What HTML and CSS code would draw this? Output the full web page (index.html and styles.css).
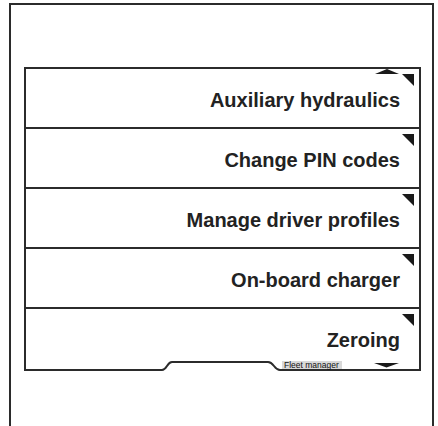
FILE: index.html
```html
<!DOCTYPE html>
<html lang="en">
<head>
    <meta charset="UTF-8">
    <meta name="viewport" content="width=device-width, initial-scale=1.0">
    <title>Settings menu</title>
    <link rel="stylesheet" href="styles.css">
</head>
<body>
    <div class="screen">
        <div class="menu">
            <svg class="scroll-up" width="24" height="5" viewBox="0 0 24 5"><polygon points="0,5 12,0 24,5" /></svg>

            <div class="menu-item">
                <svg class="corner" width="12" height="12" viewBox="0 0 12 12"><polygon points="0,0 12,0 12,12" /></svg>
                <span class="label">Auxiliary hydraulics</span>
            </div>
            <div class="menu-item">
                <svg class="corner" width="12" height="12" viewBox="0 0 12 12"><polygon points="0,0 12,0 12,12" /></svg>
                <span class="label">Change PIN codes</span>
            </div>
            <div class="menu-item">
                <svg class="corner" width="12" height="12" viewBox="0 0 12 12"><polygon points="0,0 12,0 12,12" /></svg>
                <span class="label">Manage driver profiles</span>
            </div>
            <div class="menu-item">
                <svg class="corner" width="12" height="12" viewBox="0 0 12 12"><polygon points="0,0 12,0 12,12" /></svg>
                <span class="label">On-board charger</span>
            </div>
            <div class="menu-item last">
                <svg class="corner" width="12" height="12" viewBox="0 0 12 12"><polygon points="0,0 12,0 12,12" /></svg>
                <span class="label">Zeroing</span>
            </div>

            <!-- bottom edge with the tab notch -->
            <div class="menu-foot">
                <svg class="foot-line" width="393" height="12" viewBox="0 0 393 12">
                    <path d="M0 11 H136 C141 11 141 3 146 3 H242 C248 3 248 11 254 11 H393" />
                </svg>
                <span class="tab-label">Fleet manager</span>
                <svg class="scroll-down" width="25" height="5" viewBox="0 0 25 5"><polygon points="0,0 25,0 12.5,4.5" /></svg>
            </div>
        </div>
    </div>
</body>
</html>
```

FILE: styles.css
```css
body {
    margin: 0;
    padding: 3px 0 0 9px;
    width: 438px;
    height: 426px;
    box-sizing: border-box;
    overflow: hidden;
    background-color: #fff;
    font-family: 'Liberation Sans', Arial, sans-serif;
    color: #222;
}
.screen {
    box-sizing: border-box;
    width: 425px;
    height: 440px;
    padding: 62px 11px 0 13px;
    border: 2px solid #2b2b2b;
}
.menu {
    position: relative;
    display: flex;
    flex-direction: column;
    width: 393px;
    border: 2px solid #2b2b2b;
    border-bottom: none;
}
.menu-item {
    display: flex;
    flex-direction: column;
    align-items: flex-end;
    box-sizing: border-box;
    height: 58px;
    padding: 5px 5px 0 0;
}
.menu-item + .menu-item {
    height: 60px;
    border-top: 2px solid #2b2b2b;
}
.menu-item.last {
    height: 52px;
}
.corner {
    fill: #1a1a1a;
}
.label {
    margin: 3px 14px 0 0;
    font-size: 20px;
    font-weight: bold;
    line-height: 23px;
    white-space: nowrap;
}
/* Scroll arrows */
.scroll-up,
.scroll-down {
    position: absolute;
    right: 20px;
    fill: #1a1a1a;
}
.scroll-up {
    top: 0;
}
.menu-foot {
    position: relative;
    height: 12px;
}
.foot-line {
    display: block;
    fill: none;
    stroke: #2b2b2b;
    stroke-width: 2;
}
.scroll-down {
    top: 4px;
}
.tab-label {
    position: absolute;
    left: 256px;
    top: 2px;
    width: 60px;
    height: 8px;
    padding-left: 2px;
    box-sizing: border-box;
    background-color: #d9d9d9;
    font-size: 8.5px;
    line-height: 8px;
    color: #111;
    white-space: nowrap;
}
```
